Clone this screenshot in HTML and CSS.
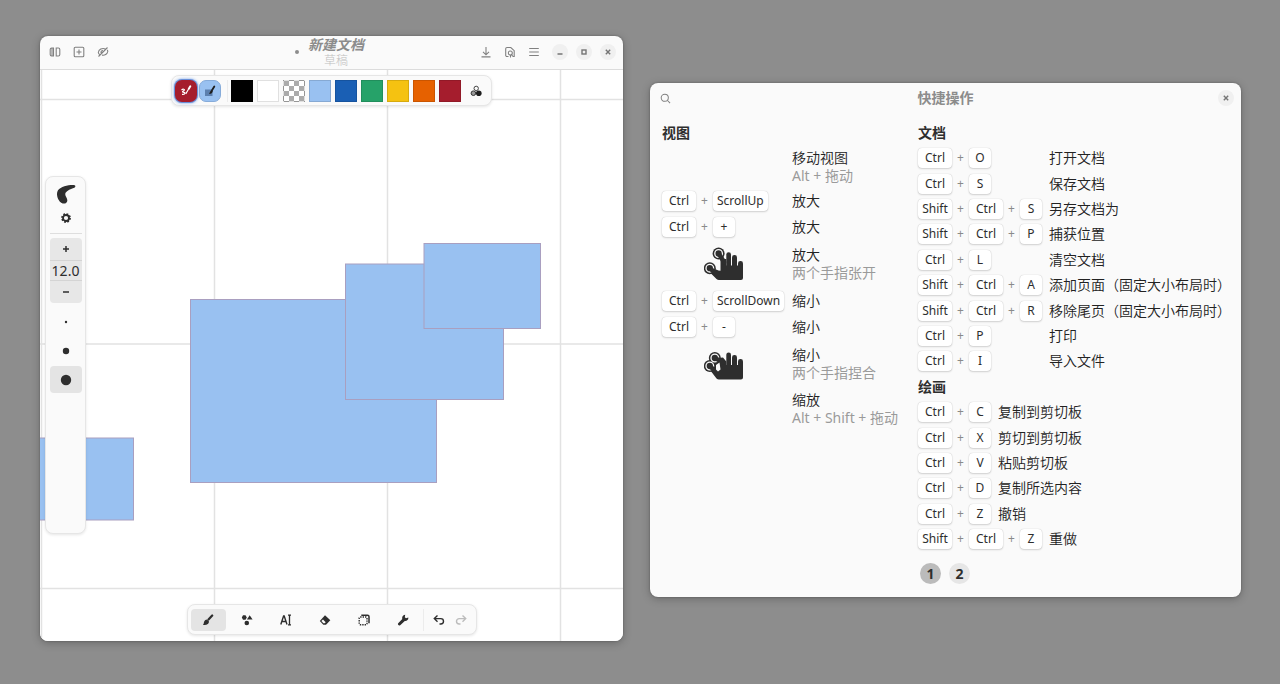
FILE: index.html
```html
<!DOCTYPE html>
<html lang="zh-CN">
<head>
<meta charset="utf-8">
<title>新建文档</title>
<link rel="stylesheet" href="styles.css">
</head>
<body>
<main class="desktop">
  <section class="window editor" aria-label="新建文档">
    <header class="titlebar">
      <div class="tools">
        <button class="icon-btn" aria-label="并排"><svg width="12" height="12" viewBox="0 0 12 12" class="line"><path d="M4.500 2H2.600Q1.200 2 1.200 3.400v5.200Q1.200 10 2.600 10h1.900zM3 2v8M7.200 2h2.200q1.400 0 1.400 1.400v5.200q0 1.400-1.400 1.400H7.200z"/></svg></button>
        <button class="icon-btn" aria-label="新建"><svg width="12" height="12" viewBox="0 0 12 12" class="line"><rect x="1.200" y="1.200" width="9.600" height="9.600" rx="1"/><path d="M6 3.500v5M3.500 6h5"/></svg></button>
        <button class="icon-btn" aria-label="隐藏"><svg width="12" height="12" viewBox="0 0 12 12" class="line"><path d="M8.500 3C5 1.500 1.800 3.500 1.300 6.500c.2.900.7 1.600 1.400 2M10.200 3.800c.5.600.6 1.200.6 1.700-.6 2.800-3.200 4.200-5.800 3.600M10.500 1.500l-9 9M4 7c-.2-1.500.7-2.500 2-2.500"/></svg></button>
      </div>
      <div class="doc">
        <span class="dot"></span>
        <div class="doc-names"><h1 class="doc-title">新建文档</h1><p class="doc-sub">草稿</p></div>
      </div>
      <div class="tools end">
        <button class="icon-btn" aria-label="保存"><svg width="12" height="12" viewBox="0 0 12 12" class="line"><path d="M6 1v7.500M3 5.800l3 3 3-3M1.500 10.900h9"/></svg></button>
        <button class="icon-btn" aria-label="查找"><svg width="12" height="12" viewBox="0 0 12 12" class="line"><path d="M4.500 10.500H3a1.300 1.300 0 0 1-1.300-1.300V2.800A1.300 1.300 0 0 1 3 1.500h3.800l3.400 3.200v5.800H8.800"/><circle cx="6.300" cy="7" r="2"/><path d="M6.500 9v2.500M7.500 8.500l1.500 2"/></svg></button>
        <button class="icon-btn" aria-label="菜单"><svg width="12" height="12" viewBox="0 0 12 12" class="line"><path d="M1.200 2.500h9.600M1.200 6h9.600M1.200 9.500h9.600"/></svg></button>
        <div class="controls">
          <button class="round" aria-label="最小化"><svg width="8" height="8" viewBox="0 0 8 8" class="bold"><path d="M1.500 6h5"/></svg></button>
          <button class="round" aria-label="最大化"><svg width="8" height="8" viewBox="0 0 8 8" class="bold"><rect x="2" y="2" width="4" height="4"/></svg></button>
          <button class="round" aria-label="关闭"><svg width="8" height="8" viewBox="0 0 8 8" class="bold"><path d="M1.800 1.800l4.400 4.400M6.200 1.800L1.800 6.200"/></svg></button>
        </div>
      </div>
    </header>
    <div class="canvas">
      <svg class="drawing" width="100%" height="100%" aria-label="画布">
        <g class="grid-lines">
          <path d="M1.500 0V4000M174.500 0V4000M347.500 0V4000M520.500 0V4000M693.500 0V4000M0 29.500H4000M0 274H4000M0 518.500H4000"/>
        </g>
        <g class="shapes">
          <rect x="150.500" y="229.500" width="246" height="183"/>
          <rect x="305.500" y="194" width="158" height="135.500"/>
          <rect x="384" y="173.500" width="116.500" height="85"/>
          <rect x="-10" y="368" width="103.500" height="82"/>
        </g>
      </svg>
      <div class="overlay">
        <div class="bar palette">
          <button class="pick stroke" aria-label="描边颜色"><svg width="14" height="14" viewBox="0 0 14 14"><path d="M2.500 6c1.500-1.300 3.500-.8 2.700.3C4.500 7.400 3 7.300 3.700 8c1 .6 3 .2 2.200 1.500-.6 1-2 1-2.900.9" fill="none" stroke="#fff" stroke-width="1.200"/><path d="M11.300 2.300L9.800 4.700" stroke="#fff" stroke-width="2" stroke-linecap="round"/><path d="M9.300 5.500L7 9.500" stroke="#fff" stroke-width="1.200" stroke-linecap="round"/></svg></button>
          <button class="pick fill" aria-label="填充颜色"><svg width="14" height="14" viewBox="0 0 14 14"><rect x="2" y="5.500" width="7.500" height="6.500" fill="#5b7fae"/><path d="M11.300 2.500L9 6.300" stroke="#1d1d1d" stroke-width="1.800" stroke-linecap="round"/><path d="M8.300 6l1.500 1.200C9.500 9 8 10 5.800 9.800 7 9 7 7 8.300 6z" fill="#1d1d1d"/></svg></button>
          <span class="vsep"></span>
          <div class="swatches">
            <button class="swatch black" aria-label="黑色"></button>
            <button class="swatch white" aria-label="白色"></button>
            <button class="swatch clear" aria-label="透明"></button>
            <button class="swatch sky" aria-label="浅蓝"></button>
            <button class="swatch blue" aria-label="蓝色"></button>
            <button class="swatch green" aria-label="绿色"></button>
            <button class="swatch yellow" aria-label="黄色"></button>
            <button class="swatch orange" aria-label="橙色"></button>
            <button class="swatch red" aria-label="红色"></button>
          </div>
          <button class="icon-btn" aria-label="选择颜色"><svg width="12" height="12" viewBox="0 0 12 12"><circle cx="6.200" cy="3.400" r="2.200" fill="none" stroke="#444"/><circle cx="3.400" cy="8.200" r="2.300" fill="#999" stroke="#333"/><circle cx="8.800" cy="8.200" r="2.800" fill="#1e1e1e"/></svg></button>
        </div>
        <div class="bar side">
          <button class="side-btn brush" aria-label="笔刷样式"><svg width="20" height="20" viewBox="0 0 20 20"><path d="M18 .9C12 .7 5 2.200 2 6.200c-2.400 3.600-.2 10.600 3.600 12.700 2.800 1.500 6 .1 5.700-2.900-.2-2.600-3-4.800-1.700-7.200 1.400-2.500 5.400-3.900 8.600-5.100 1.500-.6 1.600-2.700-.2-2.800z" fill="#2e2e2e"/></svg></button>
          <button class="side-btn gear" aria-label="设置"><svg width="10" height="10" viewBox="0 0 10 10"><circle cx="5" cy="5" r="4" fill="none" stroke="#2e2e2e" stroke-width="1.800" stroke-dasharray="1.700 1.440"/><circle cx="5" cy="5" r="3" fill="none" stroke="#2e2e2e" stroke-width="1.800"/></svg></button>
          <span class="hsep"></span>
          <div class="stepper">
            <button class="step" aria-label="增加"><svg width="8" height="8" viewBox="0 0 8 8"><path d="M4 1v6M1 4h6" stroke="#2e2e2e" stroke-width="1.500"/></svg></button>
            <input class="size" type="text" value="12.0" aria-label="笔刷大小">
            <button class="step" aria-label="减少"><svg width="8" height="8" viewBox="0 0 8 8"><path d="M1 4h6" stroke="#2e2e2e" stroke-width="1.500"/></svg></button>
          </div>
          <div class="presets">
            <button class="preset" aria-label="细"><svg width="12" height="12"><circle cx="6" cy="6" r="1.200"/></svg></button>
            <button class="preset" aria-label="中"><svg width="12" height="12"><circle cx="6" cy="6" r="3.200"/></svg></button>
            <button class="preset on" aria-label="粗"><svg width="12" height="12"><circle cx="6" cy="6" r="5.200"/></svg></button>
          </div>
        </div>
        <div class="bar modes">
          <div class="mode-list">
            <button class="mode on" aria-label="画笔"><svg width="12" height="12" viewBox="0 0 12 12"><path d="M10.200 1.500L6.500 5.600" stroke="#2e2e2e" stroke-width="2.200" stroke-linecap="round"/><path d="M5 5.500l2 2C7 10 4.500 11.500.8 10.800 2 10 1.600 9 2.200 7.500 2.700 6.200 3.800 5.500 5 5.500z"/></svg></button>
            <button class="mode" aria-label="形状"><svg width="12" height="12" viewBox="0 0 12 12"><path d="M2 1.300h2.500L5.800 3.500 4.500 5.700H2L.8 3.500z"/><path d="M8.700 1.300l2.900 4.300H5.900z"/><circle cx="5.800" cy="9" r="2.300"/></svg></button>
            <button class="mode" aria-label="文字"><svg width="12" height="12" viewBox="0 0 12 12" fill="none" stroke="#2e2e2e"><path d="M.8 10.500L3.600 2h.6L7 10.500M1.900 7.500h4" stroke-width="1.400"/><path d="M8 1.200h3M8 10.800h3M9.500 1v10" stroke-width="1.300"/></svg></button>
            <button class="mode" aria-label="橡皮"><svg width="12" height="12" viewBox="0 0 12 12"><path d="M6 1.200L11.300 6.200 7 10.800H4.300L.8 7z"/><path d="M2.400 7l2 2.200h1.300L6.700 8.200 4 5.500z" fill="#fafafa"/></svg></button>
            <button class="mode" aria-label="选择"><svg width="12" height="12" viewBox="0 0 12 12" fill="none" stroke="#2e2e2e"><rect x="1.200" y="3" width="7.800" height="7.800" rx="1" stroke-width="1.400" stroke-dasharray="1.400 1"/><path d="M3.300 1.300h6.200q1.500 0 1.500 1.500v6.400" stroke-width="1.500"/></svg></button>
            <button class="mode" aria-label="工具"><svg width="12" height="12" viewBox="0 0 12 12"><path d="M8.200.8l-.4 2.500 1.200.9 2.300-.7c.4 2-1.400 3.900-3.500 3.500L3.200 11.200c-1.200 1-3-.6-2-2L5.300 5C4.600 2.700 6.200.9 8.200.8z"/></svg></button>
          </div>
          <span class="vsep"></span>
          <button class="hist" aria-label="撤销"><svg width="12" height="12" viewBox="0 0 12 12"><path d="M4.500 1.500L1.300 4.600l3.200 3.100M1.500 4.600h6.300a2.700 2.700 0 0 1 0 5.400H6.500"/></svg></button>
          <button class="hist" aria-label="重做" disabled><svg width="12" height="12" viewBox="0 0 12 12"><path d="M7.500 1.500l3.200 3.100-3.200 3.100M10.500 4.600H4.200a2.700 2.700 0 0 0 0 5.400h1.300"/></svg></button>
        </div>
      </div>
    </div>
  </section>

  <section class="window shortcuts" aria-label="快捷操作">
    <header class="help-bar">
      <button class="icon-btn" aria-label="搜索"><svg width="11" height="11" viewBox="0 0 12 12" class="line"><circle cx="5.200" cy="5.200" r="3.900"/><path d="M8.200 8.200l2.800 2.800"/></svg></button>
      <h2 class="help-title">快捷操作</h2>
      <button class="round close" aria-label="关闭"><svg width="8" height="8" viewBox="0 0 8 8" class="bold"><path d="M1.800 1.800l4.400 4.400M6.200 1.800L1.800 6.200"/></svg></button>
    </header>
    <div class="help-body">
      <div class="column views">
        <h3 class="group">视图</h3>
        <div class="row tall"><span class="keys"></span><p class="desc">移动视图<small class="note">Alt + 拖动</small></p></div>
        <div class="row"><span class="keys"><kbd class="mod">Ctrl</kbd><i class="plus">+</i><kbd>ScrollUp</kbd></span><p class="desc">放大</p></div>
        <div class="row"><span class="keys"><kbd class="mod">Ctrl</kbd><i class="plus">+</i><kbd>+</kbd></span><p class="desc">放大</p></div>
        <div class="row gesture"><span class="keys"><svg class="hand" width="40" height="34" viewBox="0 0 40 34"><g class="ink"><rect x="22.300" y="5.300" width="4.700" height="20" rx="2.300"/><rect x="28" y="8" width="5" height="18" rx="2.400"/><rect x="34" y="14" width="5" height="14" rx="2.400"/><path d="M16.500 12h5.800v6.500H39V31q0 2-2 2H15q-1.500 0-2.500-1L6 25.500l3-4.300 5.500 2.300 2 .2z"/><circle cx="14.600" cy="6.500" r="6"/><circle cx="5.800" cy="21.200" r="6"/></g><g class="ring"><circle cx="14.600" cy="6.500" r="3.800"/><circle cx="5.800" cy="21.200" r="3.800"/></g><path class="finger" d="M14.800 6.700L20 15M6 21.500L13 27"/></svg></span><p class="desc">放大<small class="note">两个手指张开</small></p></div>
        <div class="row"><span class="keys"><kbd class="mod">Ctrl</kbd><i class="plus">+</i><kbd>ScrollDown</kbd></span><p class="desc">缩小</p></div>
        <div class="row"><span class="keys"><kbd class="mod">Ctrl</kbd><i class="plus">+</i><kbd>-</kbd></span><p class="desc">缩小</p></div>
        <div class="row gesture"><span class="keys"><svg class="hand" width="40" height="34" viewBox="0 0 40 34"><g class="ink"><rect x="22.300" y="5.500" width="4.700" height="20" rx="2.300"/><rect x="28" y="8" width="5" height="18" rx="2.400"/><rect x="34" y="12" width="5" height="14" rx="2.400"/><path d="M14 11l5-.5 3.300 4V18H39v12.500q0 2-2 2H15q-1.500 0-2.500-1L6 23l4-8z"/><circle cx="10.800" cy="11" r="6"/><circle cx="5.800" cy="19" r="6"/></g><g class="ring"><circle cx="10.800" cy="11" r="3.800"/><circle cx="5.800" cy="19" r="3.800"/></g><path class="finger" d="M11 11.200L19 15M6 19.200L12 25"/><path class="gap" d="M12 18l3.500-2.500 1 7L14 24.500l-2-2z"/></svg></span><p class="desc">缩小<small class="note">两个手指捏合</small></p></div>
        <div class="row tall"><span class="keys"></span><p class="desc">缩放<small class="note">Alt + Shift + 拖动</small></p></div>
      </div>
      <div class="column actions">
        <h3 class="group">文档</h3>
        <div class="row"><span class="keys"><kbd class="mod">Ctrl</kbd><i class="plus">+</i><kbd>O</kbd></span><p class="desc">打开文档</p></div>
        <div class="row"><span class="keys"><kbd class="mod">Ctrl</kbd><i class="plus">+</i><kbd>S</kbd></span><p class="desc">保存文档</p></div>
        <div class="row"><span class="keys"><kbd class="mod">Shift</kbd><i class="plus">+</i><kbd class="mod">Ctrl</kbd><i class="plus">+</i><kbd>S</kbd></span><p class="desc">另存文档为</p></div>
        <div class="row"><span class="keys"><kbd class="mod">Shift</kbd><i class="plus">+</i><kbd class="mod">Ctrl</kbd><i class="plus">+</i><kbd>P</kbd></span><p class="desc">捕获位置</p></div>
        <div class="row"><span class="keys"><kbd class="mod">Ctrl</kbd><i class="plus">+</i><kbd>L</kbd></span><p class="desc">清空文档</p></div>
        <div class="row"><span class="keys"><kbd class="mod">Shift</kbd><i class="plus">+</i><kbd class="mod">Ctrl</kbd><i class="plus">+</i><kbd>A</kbd></span><p class="desc">添加页面（固定大小布局时）</p></div>
        <div class="row"><span class="keys"><kbd class="mod">Shift</kbd><i class="plus">+</i><kbd class="mod">Ctrl</kbd><i class="plus">+</i><kbd>R</kbd></span><p class="desc">移除尾页（固定大小布局时）</p></div>
        <div class="row"><span class="keys"><kbd class="mod">Ctrl</kbd><i class="plus">+</i><kbd>P</kbd></span><p class="desc">打印</p></div>
        <div class="row"><span class="keys"><kbd class="mod">Ctrl</kbd><i class="plus">+</i><kbd>I</kbd></span><p class="desc">导入文件</p></div>
        <h3 class="group">绘画</h3>
        <div class="row snug"><span class="keys"><kbd class="mod">Ctrl</kbd><i class="plus">+</i><kbd>C</kbd></span><p class="desc">复制到剪切板</p></div>
        <div class="row snug"><span class="keys"><kbd class="mod">Ctrl</kbd><i class="plus">+</i><kbd>X</kbd></span><p class="desc">剪切到剪切板</p></div>
        <div class="row snug"><span class="keys"><kbd class="mod">Ctrl</kbd><i class="plus">+</i><kbd>V</kbd></span><p class="desc">粘贴剪切板</p></div>
        <div class="row snug"><span class="keys"><kbd class="mod">Ctrl</kbd><i class="plus">+</i><kbd>D</kbd></span><p class="desc">复制所选内容</p></div>
        <div class="row snug"><span class="keys"><kbd class="mod">Ctrl</kbd><i class="plus">+</i><kbd>Z</kbd></span><p class="desc">撤销</p></div>
        <div class="row snug"><span class="keys"><kbd class="mod">Shift</kbd><i class="plus">+</i><kbd class="mod">Ctrl</kbd><i class="plus">+</i><kbd>Z</kbd></span><p class="desc">重做</p></div>
      </div>
      <nav class="pages" aria-label="页码"><button class="page on">1</button><button class="page">2</button></nav>
    </div>
  </section>
</main>
</body>
</html>
```
FILE: styles.css
```css
* { box-sizing: border-box; margin: 0; padding: 0; }
body {
  background: #8d8d8d;
  color: #2e2e2e;
  font: 14px/18px "Noto Sans", "Noto Sans CJK SC", sans-serif;
}
button, input { border: 0; background: none; color: inherit; font: inherit; }
button { display: flex; align-items: center; justify-content: center; flex: none; }
svg { display: block; flex: none; }

.desktop {
  display: flex;
  align-items: flex-start;
  gap: 27px;
  min-height: 100vh;
  padding: 36px 39px 43px 40px;
}
.window {
  display: flex;
  flex-direction: column;
  min-width: 0;
  overflow: hidden;
  background: #fafafa;
  border-radius: 8px;
  box-shadow: 0 0 2px rgba(0, 0, 0, .3), 0 2px 8px rgba(0, 0, 0, .25);
}
.editor { flex: 583 1 0; align-self: stretch; }
.shortcuts { flex: 591 1 0; min-height: 514px; margin-top: 47px; }

.line { fill: none; stroke: #808080; stroke-width: 1.1; }
.bold { fill: none; stroke: #747474; stroke-width: 1.4; }

.titlebar {
  display: grid;
  grid-template-columns: 1fr auto 1fr;
  align-items: center;
  height: 34px;
  padding: 0 7px 1px 3px;
  border-bottom: 1px solid #dcdcdc;
}
.tools { display: flex; align-items: center; }
.end { justify-content: flex-end; }
.icon-btn { width: 24px; height: 24px; }
.controls { display: flex; gap: 8px; margin-left: 6px; }
.round { width: 16px; height: 16px; border-radius: 50%; background: #f0f0f0; }
.doc { display: flex; align-items: center; gap: 9px; }
.dot { width: 4px; height: 4px; border-radius: 50%; background: #8c8c8c; }
.doc-names { text-align: center; }
.doc-title { font-size: 14px; line-height: 18px; font-style: italic; color: #8c8c8c; }
.doc-sub { font-size: 12px; line-height: 14px; color: #c0c0c0; font-weight: 300; }

.canvas { display: grid; flex: 1; background: #fff; }
.drawing, .overlay { grid-area: 1 / 1; }
.grid-lines { stroke: #e2e2e2; stroke-width: 1.5; }
.shapes { fill: #99c1f1; stroke: #a99fc0; stroke-width: 1; }
.overlay {
  z-index: 1;
  display: grid;
  grid-template-rows: auto 1fr auto;
  align-items: center;
  justify-items: center;
  padding: 5px 5px 6px;
}
.bar {
  display: flex;
  align-items: center;
  background: #fafafa;
  border: 1px solid #e6e6e6;
  border-radius: 8px;
  box-shadow: 0 1px 3px rgba(0, 0, 0, .1);
}
.vsep { width: 1px; height: 22px; background: #ececec; }
.hsep { width: 32px; height: 1px; background: #dedede; }

.palette { height: 31px; padding: 0 3px; }
.pick { width: 22px; height: 22px; margin-right: 2px; border-radius: 7px; }
.stroke { background: #a51d2d; box-shadow: 0 0 0 1px #6a8fd8, 0 0 3px 1px #78a3e8; }
.fill { background: #99c1f1; border: 1px solid #86abd9; }
.palette .vsep { margin: 0 3px 0 4px; }
.swatches { display: flex; gap: 4px; margin-right: 3px; }
.swatch { width: 22px; height: 22px; border: 1px solid rgba(0, 0, 0, .12); }
.black { background: #000; }
.white { background: #fff; }
.clear { background: repeating-conic-gradient(#fff 0 25%, #ababab 0 50%) 0 0 / 10px 10px; }
.sky { background: #99c1f1; }
.blue { background: #1a5fb4; }
.green { background: #26a269; }
.yellow { background: #f5c211; }
.orange { background: #e66100; }
.red { background: #a51d2d; }

.side {
  flex-direction: column;
  justify-self: start;
  width: 41px;
  min-height: 358px;
  padding-top: 4px;
}
.side-btn { width: 32px; }
.brush { height: 26px; }
.gear { height: 22px; }
.hsep { margin: 4px 0; }
.stepper { width: 32px; overflow: hidden; border-radius: 4px; background: #e7e7e7; }
.step { width: 100%; height: 22px; }
.size {
  display: block;
  width: 100%;
  height: 21px;
  border: solid #d4d4d4;
  border-width: 1px 0;
  text-align: center;
}
.presets { display: flex; flex-direction: column; gap: 2px; margin-top: 5px; }
.preset { width: 32px; height: 27px; border-radius: 4px; fill: #2e2e2e; }
.preset.on, .mode.on { background: #e4e4e4; }

.modes { width: 290px; height: 31px; padding: 0 4px 0 3px; }
.mode-list { display: flex; flex: 1; gap: 3px; }
.mode { flex: 1; height: 22px; border-radius: 4px; fill: #2e2e2e; }
.modes .vsep { margin: 0 4px 0 2px; }
.hist { width: 22px; height: 22px; fill: none; stroke: #2e2e2e; stroke-width: 1.4; }
.hist:disabled { stroke: #bcbcbc; }

.help-bar {
  display: grid;
  grid-template-columns: 1fr auto 1fr;
  align-items: center;
  height: 30px;
  padding: 0 7px 0 2px;
}
.help-bar { padding-left: 7px; }
.help-bar .icon-btn { width: 16px; }
.help-title { font-size: 14px; line-height: 18px; color: #8c8c8c; }
.close { justify-self: end; }
.help-body {
  display: grid;
  grid-template-columns: 244fr 310fr;
  grid-template-rows: 1fr auto;
  column-gap: 14px;
  flex: 1;
  padding: 7px 10px 13px 12px;
}
.column { display: grid; }
.views { align-content: start; grid-auto-rows: minmax(26px, auto); }
.actions { grid-auto-rows: 1fr; }
.group { align-self: center; font-size: 14px; line-height: 18px; }
.row {
  display: grid;
  grid-template-columns: 123px 1fr;
  column-gap: 7px;
  align-items: center;
}
.actions .row { grid-template-columns: 124px 1fr; }
.actions .snug { grid-template-columns: auto 1fr; }
.tall { height: 42px; }
.gesture { height: 48px; }
.keys { display: flex; align-items: center; }
kbd {
  min-width: 22px;
  padding: 0 4px;
  background: #fff;
  border-radius: 4px;
  box-shadow: 0 0 1px rgba(0, 0, 0, .25), 0 1px 2px rgba(0, 0, 0, .15);
  font: 12px/20px "Noto Sans", sans-serif;
  text-align: center;
}
.mod { min-width: 34px; }
.plus { width: 17px; color: #8a8a8a; font-size: 12px; font-style: normal; text-align: center; }
.hand { margin: 0 auto; }
.ink, .finger { fill: #2e2e2e; }
.ring { fill: none; stroke: #fafafa; stroke-width: 1.3; }
.finger { stroke: #2e2e2e; stroke-width: 4.5; stroke-linecap: round; }
.gap { fill: #fafafa; }
.desc { font-weight: 350; color: #222; white-space: nowrap; }
.note { display: block; font-size: 14px; font-weight: 400; color: #9a9a9a; }
.pages { grid-column: 2; display: flex; gap: 8px; margin: 11px 0 0 2px; }
.page { width: 21px; height: 21px; border-radius: 50%; background: #e6e6e6; font-weight: 700; }
.page.on { background: #bbb; }
```
